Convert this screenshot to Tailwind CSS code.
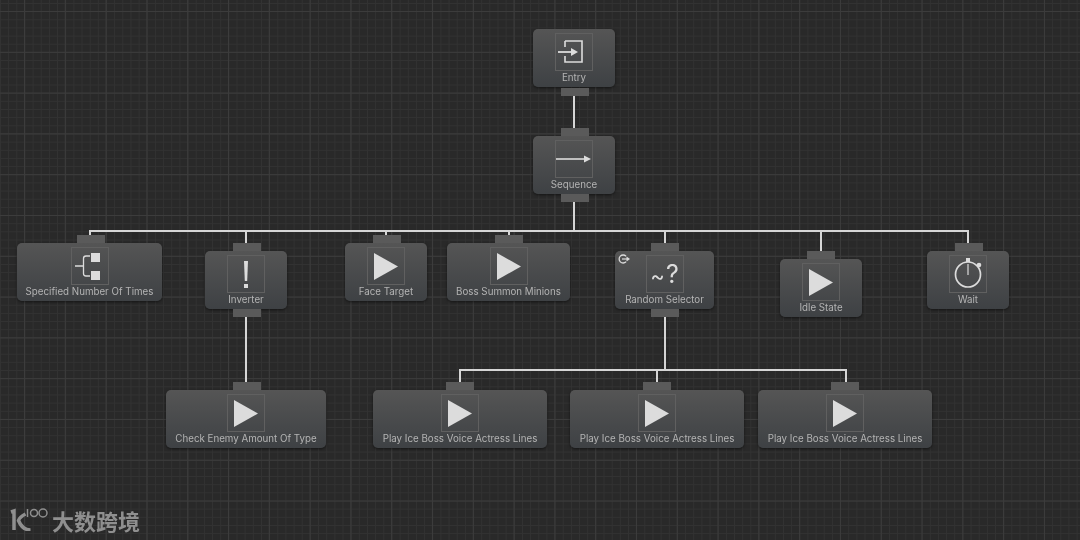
<!DOCTYPE html>
<html>
<head>
<meta charset="utf-8">
<script src="https://cdn.jsdelivr.net/npm/@tailwindcss/browser@4"></script>
</head>
<body class="m-0 overflow-hidden">
<div class="relative w-[1080px] h-[540px] overflow-hidden blur-[0.35px] bg-[#292929] font-['Inter','Liberation_Sans',sans-serif] bg-[linear-gradient(to_right,#3c3c3c_1px,transparent_1px),linear-gradient(to_bottom,#3c3c3c_1px,transparent_1px),linear-gradient(to_right,#323232_1px,transparent_1px),linear-gradient(to_bottom,#323232_1px,transparent_1px)] bg-[size:40.8px_40.8px,40.8px_40.8px,8.16px_8.16px,8.16px_8.16px] bg-[position:24px_11px,24px_11px,0px_3px,0px_3px]">

    <!-- connection lines -->
    <div class="absolute left-[573px] top-[96px] w-[2px] h-[32px] bg-[#d6d6d6]"></div>
    <div class="absolute left-[573px] top-[202px] w-[2px] h-[28px] bg-[#d6d6d6]"></div>
    <div class="absolute left-[89px] top-[230px] w-[880px] h-[2px] bg-[#d6d6d6]"></div>
    <div class="absolute left-[89px] top-[230px] w-[2px] h-[6px] bg-[#d6d6d6]"></div>
    <div class="absolute left-[245px] top-[230px] w-[2px] h-[14px] bg-[#d6d6d6]"></div>
    <div class="absolute left-[385px] top-[230px] w-[2px] h-[6px] bg-[#d6d6d6]"></div>
    <div class="absolute left-[508px] top-[230px] w-[2px] h-[6px] bg-[#d6d6d6]"></div>
    <div class="absolute left-[664px] top-[230px] w-[2px] h-[14px] bg-[#d6d6d6]"></div>
    <div class="absolute left-[820px] top-[230px] w-[2px] h-[22px] bg-[#d6d6d6]"></div>
    <div class="absolute left-[967px] top-[230px] w-[2px] h-[14px] bg-[#d6d6d6]"></div>
    <div class="absolute left-[245px] top-[317px] w-[2px] h-[66px] bg-[#d6d6d6]"></div>
    <div class="absolute left-[664px] top-[317px] w-[2px] h-[53px] bg-[#d6d6d6]"></div>
    <div class="absolute left-[459px] top-[369px] w-[388px] h-[2px] bg-[#d6d6d6]"></div>
    <div class="absolute left-[459px] top-[369px] w-[2px] h-[14px] bg-[#d6d6d6]"></div>
    <div class="absolute left-[656px] top-[369px] w-[2px] h-[14px] bg-[#d6d6d6]"></div>
    <div class="absolute left-[845px] top-[369px] w-[2px] h-[14px] bg-[#d6d6d6]"></div>

    <!-- Entry -->
    <div class="absolute left-[533px] top-[29px] w-[82px] h-[58px] rounded-[5px] bg-gradient-to-b from-[#555555] to-[#3e4144] shadow-[0_1px_3px_rgba(0,0,0,0.5)] flex flex-col items-center pt-[4px]">
        <div class="absolute left-[28px] top-[59px] w-[28px] h-[8px] bg-[#5a5a5a]"></div>
        <div class="w-[38px] h-[38px] border border-[#606060]">
            <svg viewBox="0 0 36 36" class="w-[36px] h-[36px]" fill="none" stroke="#dcdcdc"><path d="M9 7h17v21H9v-6M9 7v6" stroke-width="1.600"/><path d="M2 18h14" stroke-width="1.800"/><path d="M15 14l7 4-7 4z" fill="#dcdcdc" stroke="none"/></svg>
        </div>
        <div class="text-[9.75px] leading-[14px] text-[#b4b4b4]">Entry</div>
    </div>

    <!-- Sequence -->
    <div class="absolute left-[533px] top-[136px] w-[82px] h-[58px] rounded-[5px] bg-gradient-to-b from-[#555555] to-[#3e4144] shadow-[0_1px_3px_rgba(0,0,0,0.5)] flex flex-col items-center pt-[4px]">
        <div class="absolute left-[28px] top-[-8px] w-[28px] h-[8px] bg-[#5a5a5a]"></div>
        <div class="absolute left-[28px] top-[58px] w-[28px] h-[8px] bg-[#5a5a5a]"></div>
        <div class="w-[38px] h-[38px] border border-[#606060]">
            <svg viewBox="0 0 36 36" class="w-[36px] h-[36px]"><path d="M0 18h30" stroke="#dcdcdc" stroke-width="1.600"/><path d="M28 14.500l7 3.500-7 3.500z" fill="#dcdcdc"/></svg>
        </div>
        <div class="text-[9.75px] leading-[14px] text-[#b4b4b4]">Sequence</div>
    </div>

    <!-- Specified Number Of Times -->
    <div class="absolute left-[17px] top-[243px] w-[145px] h-[58px] rounded-[5px] bg-gradient-to-b from-[#555555] to-[#3e4144] shadow-[0_1px_3px_rgba(0,0,0,0.5)] flex flex-col items-center pt-[4px]">
        <div class="absolute left-[60px] top-[-8px] w-[28px] h-[8px] bg-[#5a5a5a]"></div>
        <div class="w-[38px] h-[38px] border border-[#606060]">
            <svg viewBox="0 0 36 36" class="w-[36px] h-[36px]" fill="none"><path d="M3 18h8.500M18 8h-4a2.500 2.500 0 0 0-2.500 2.500v15a2.500 2.500 0 0 0 2.500 2.500h4" stroke="#dcdcdc" stroke-width="1.300"/><rect x="19" y="5" width="9" height="9" fill="#dcdcdc"/><rect x="19" y="23" width="9" height="9" fill="#dcdcdc"/></svg>
        </div>
        <div class="text-[9.75px] leading-[14px] text-[#b4b4b4] whitespace-nowrap">Specified Number Of Times</div>
    </div>

    <!-- Inverter -->
    <div class="absolute left-[205px] top-[251px] w-[82px] h-[58px] rounded-[5px] bg-gradient-to-b from-[#555555] to-[#3e4144] shadow-[0_1px_3px_rgba(0,0,0,0.5)] flex flex-col items-center pt-[4px]">
        <div class="absolute left-[28px] top-[-8px] w-[28px] h-[8px] bg-[#5a5a5a]"></div>
        <div class="absolute left-[28px] top-[58px] w-[28px] h-[8px] bg-[#5a5a5a]"></div>
        <div class="w-[38px] h-[38px] border border-[#606060]">
            <svg viewBox="0 0 36 36" class="w-[36px] h-[36px]"><path d="M16 5h4l-.8 20h-2.400z" fill="#dcdcdc"/><rect x="16" y="28" width="4" height="4" fill="#dcdcdc"/></svg>
        </div>
        <div class="text-[9.75px] leading-[14px] text-[#b4b4b4]">Inverter</div>
    </div>

    <!-- Face Target -->
    <div class="absolute left-[345px] top-[243px] w-[82px] h-[58px] rounded-[5px] bg-gradient-to-b from-[#555555] to-[#3e4144] shadow-[0_1px_3px_rgba(0,0,0,0.5)] flex flex-col items-center pt-[4px]">
        <div class="absolute left-[28px] top-[-8px] w-[28px] h-[8px] bg-[#5a5a5a]"></div>
        <div class="w-[38px] h-[38px] border border-[#606060]">
            <svg viewBox="0 0 36 36" class="w-[36px] h-[36px]"><path d="M6 5l24 13.500L6 32z" fill="#dcdcdc"/></svg>
        </div>
        <div class="text-[9.75px] leading-[14px] text-[#b4b4b4]">Face Target</div>
    </div>

    <!-- Boss Summon Minions -->
    <div class="absolute left-[447px] top-[243px] w-[123px] h-[58px] rounded-[5px] bg-gradient-to-b from-[#555555] to-[#3e4144] shadow-[0_1px_3px_rgba(0,0,0,0.5)] flex flex-col items-center pt-[4px]">
        <div class="absolute left-[48px] top-[-8px] w-[28px] h-[8px] bg-[#5a5a5a]"></div>
        <div class="w-[38px] h-[38px] border border-[#606060]">
            <svg viewBox="0 0 36 36" class="w-[36px] h-[36px]"><path d="M6 5l24 13.500L6 32z" fill="#dcdcdc"/></svg>
        </div>
        <div class="text-[9.75px] leading-[14px] text-[#b4b4b4] whitespace-nowrap">Boss Summon Minions</div>
    </div>

    <!-- Random Selector -->
    <div class="absolute left-[615px] top-[251px] w-[99px] h-[58px] rounded-[5px] bg-gradient-to-b from-[#555555] to-[#3e4144] shadow-[0_1px_3px_rgba(0,0,0,0.5)] flex flex-col items-center pt-[4px]">
        <div class="absolute left-[36px] top-[-8px] w-[28px] h-[8px] bg-[#5a5a5a]"></div>
        <div class="absolute left-[36px] top-[58px] w-[28px] h-[8px] bg-[#5a5a5a]"></div>
        <svg viewBox="0 0 14 12" class="absolute left-[2px] top-[2px] w-[14px] h-[12px]" fill="none"><path d="M9 3.200A4 4 0 1 0 9 8.800" stroke="#dcdcdc" stroke-width="1.300"/><path d="M5 6h5" stroke="#dcdcdc" stroke-width="1.200"/><path d="M9.500 3.500L13 6 9.500 8.500z" fill="#dcdcdc"/></svg>
        <div class="w-[38px] h-[38px] border border-[#606060] flex items-center justify-center gap-[1px] text-[#dcdcdc] leading-none whitespace-nowrap">
            <span class="text-[22px] mt-[3px]">~</span><span class="text-[25px]">?</span>
        </div>
        <div class="text-[9.75px] leading-[14px] text-[#b4b4b4] whitespace-nowrap">Random Selector</div>
    </div>

    <!-- Idle State -->
    <div class="absolute left-[780px] top-[259px] w-[82px] h-[58px] rounded-[5px] bg-gradient-to-b from-[#555555] to-[#3e4144] shadow-[0_1px_3px_rgba(0,0,0,0.5)] flex flex-col items-center pt-[4px]">
        <div class="absolute left-[27px] top-[-8px] w-[28px] h-[8px] bg-[#5a5a5a]"></div>
        <div class="w-[38px] h-[38px] border border-[#606060]">
            <svg viewBox="0 0 36 36" class="w-[36px] h-[36px]"><path d="M6 5l24 13.500L6 32z" fill="#dcdcdc"/></svg>
        </div>
        <div class="text-[9.75px] leading-[14px] text-[#b4b4b4]">Idle State</div>
    </div>

    <!-- Wait -->
    <div class="absolute left-[927px] top-[251px] w-[82px] h-[58px] rounded-[5px] bg-gradient-to-b from-[#555555] to-[#3e4144] shadow-[0_1px_3px_rgba(0,0,0,0.5)] flex flex-col items-center pt-[4px]">
        <div class="absolute left-[28px] top-[-8px] w-[28px] h-[8px] bg-[#5a5a5a]"></div>
        <div class="w-[38px] h-[38px] border border-[#606060]">
            <svg viewBox="0 0 36 36" class="w-[36px] h-[36px]" fill="none"><circle cx="18" cy="18.500" r="12.500" stroke="#dcdcdc" stroke-width="1.700"/><path d="M18 8v11" stroke="#dcdcdc" stroke-width="1.200"/><rect x="16" y="2" width="4" height="4" fill="#dcdcdc"/><circle cx="29" cy="9" r="2.300" fill="#dcdcdc"/></svg>
        </div>
        <div class="text-[9.75px] leading-[14px] text-[#b4b4b4]">Wait</div>
    </div>

    <!-- Check Enemy Amount Of Type -->
    <div class="absolute left-[166px] top-[390px] w-[160px] h-[58px] rounded-[5px] bg-gradient-to-b from-[#555555] to-[#3e4144] shadow-[0_1px_3px_rgba(0,0,0,0.5)] flex flex-col items-center pt-[4px]">
        <div class="absolute left-[67px] top-[-8px] w-[28px] h-[8px] bg-[#5a5a5a]"></div>
        <div class="w-[38px] h-[38px] border border-[#606060]">
            <svg viewBox="0 0 36 36" class="w-[36px] h-[36px]"><path d="M6 5l24 13.500L6 32z" fill="#dcdcdc"/></svg>
        </div>
        <div class="text-[9.75px] leading-[14px] text-[#b4b4b4] whitespace-nowrap">Check Enemy Amount Of Type</div>
    </div>

    <!-- Play Ice Boss Voice Actress Lines -->
    <div class="absolute left-[373px] top-[390px] w-[174px] h-[58px] rounded-[5px] bg-gradient-to-b from-[#555555] to-[#3e4144] shadow-[0_1px_3px_rgba(0,0,0,0.5)] flex flex-col items-center pt-[4px]">
        <div class="absolute left-[73px] top-[-8px] w-[28px] h-[8px] bg-[#5a5a5a]"></div>
        <div class="w-[38px] h-[38px] border border-[#606060]">
            <svg viewBox="0 0 36 36" class="w-[36px] h-[36px]"><path d="M6 5l24 13.500L6 32z" fill="#dcdcdc"/></svg>
        </div>
        <div class="text-[9.75px] leading-[14px] text-[#b4b4b4] whitespace-nowrap">Play Ice Boss Voice Actress Lines</div>
    </div>
    <div class="absolute left-[570px] top-[390px] w-[174px] h-[58px] rounded-[5px] bg-gradient-to-b from-[#555555] to-[#3e4144] shadow-[0_1px_3px_rgba(0,0,0,0.5)] flex flex-col items-center pt-[4px]">
        <div class="absolute left-[73px] top-[-8px] w-[28px] h-[8px] bg-[#5a5a5a]"></div>
        <div class="w-[38px] h-[38px] border border-[#606060]">
            <svg viewBox="0 0 36 36" class="w-[36px] h-[36px]"><path d="M6 5l24 13.500L6 32z" fill="#dcdcdc"/></svg>
        </div>
        <div class="text-[9.75px] leading-[14px] text-[#b4b4b4] whitespace-nowrap">Play Ice Boss Voice Actress Lines</div>
    </div>
    <div class="absolute left-[758px] top-[390px] w-[174px] h-[58px] rounded-[5px] bg-gradient-to-b from-[#555555] to-[#3e4144] shadow-[0_1px_3px_rgba(0,0,0,0.5)] flex flex-col items-center pt-[4px]">
        <div class="absolute left-[73px] top-[-8px] w-[28px] h-[8px] bg-[#5a5a5a]"></div>
        <div class="w-[38px] h-[38px] border border-[#606060]">
            <svg viewBox="0 0 36 36" class="w-[36px] h-[36px]"><path d="M6 5l24 13.500L6 32z" fill="#dcdcdc"/></svg>
        </div>
        <div class="text-[9.75px] leading-[14px] text-[#b4b4b4] whitespace-nowrap">Play Ice Boss Voice Actress Lines</div>
    </div>

    <!-- watermark -->
    <div class="absolute left-[10px] top-[507px] flex items-start gap-[4px]">
        <svg viewBox="0 0 38 24" class="w-[38px] h-[24px]" fill="none" stroke="#8f8f8f"><path d="M1 5l3-1v19" stroke-width="3.500"/><path d="M15.500 7c-3 1.500-6 3.500-7 6.500 2 5 6 9.500 12 9.500" stroke-width="3.500"/><path d="M17.500 2v8" stroke-width="1.500"/><circle cx="24" cy="6" r="3.500" stroke-width="1.500"/><circle cx="33" cy="6" r="4" stroke-width="1.500"/></svg>
        <span class="text-[22px] leading-[26px] font-bold text-[#8f8f8f] font-['Noto_Sans_CJK_SC',sans-serif]">大数跨境</span>
    </div>
</div>
</body>
</html>
